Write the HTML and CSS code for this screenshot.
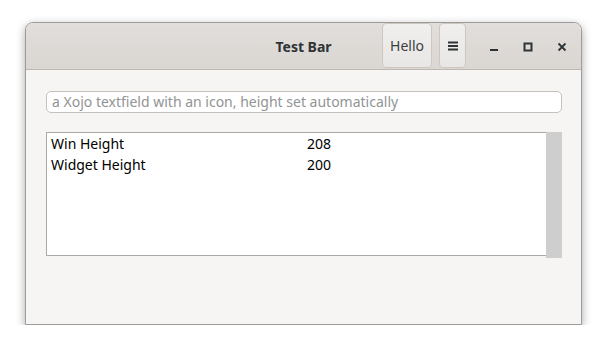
FILE: index.html
```html
<!DOCTYPE html>
<html lang="en">
<head>
    <meta charset="UTF-8">
    <meta name="viewport" content="width=device-width, initial-scale=1.0">
    <title>Test Bar</title>
    <link rel="stylesheet" href="styles.css">
</head>
<body>
    <div class="window">
        <div class="headerbar">
            <div></div>
            <div class="title">Test Bar</div>
            <div class="header-end">
                <button class="hbutton hello">Hello</button>
                <button class="hbutton menu">
                    <svg width="12" height="12" viewBox="0 0 12 12">
                        <rect x="1" y="1.5" width="10" height="2" fill="#2e3436"/>
                        <rect x="1" y="5" width="10" height="2" fill="#2e3436"/>
                        <rect x="1" y="8.5" width="10" height="2" fill="#2e3436"/>
                    </svg>
                </button>
                <div class="controls">
                    <span class="ctl">
                        <svg width="10" height="10" viewBox="0 0 10 10"><rect x="1" y="7" width="8" height="2" fill="#2e3436"/></svg>
                    </span>
                    <span class="ctl">
                        <svg width="10" height="10" viewBox="0 0 10 10"><rect x="1.5" y="1.5" width="7" height="7" fill="none" stroke="#2e3436" stroke-width="2"/></svg>
                    </span>
                    <span class="ctl">
                        <svg width="10" height="10" viewBox="0 0 10 10"><path d="M1.5 1.5 L8.5 8.5 M8.5 1.5 L1.5 8.5" stroke="#2e3436" stroke-width="1.8"/></svg>
                    </span>
                </div>
            </div>
        </div>
        <div class="content">
            <div class="textfield">a Xojo textfield with an icon, height set automatically</div>
            <div class="listbox">
                <div class="rows">
                    <div class="row"><span class="col1">Win Height</span><span>208</span></div>
                    <div class="row"><span class="col1">Widget Height</span><span>200</span></div>
                </div>
                <div class="scrollbar"></div>
            </div>
        </div>
    </div>
</body>
</html>
```

FILE: styles.css
```css
body {
    margin: 0;
    background: #ffffff;
    font-family: 'Noto Sans', 'Open Sans', sans-serif;
    color: #2e3436;
}
.window {
    margin: 22px 0 0 25px;
    width: 557px;
    height: 303px;
    box-sizing: border-box;
    border: 1px solid #9e9c9a;
    border-radius: 8px 8px 0 0;
    background: #f6f5f4;
    box-shadow: 0 3px 10px rgba(0, 0, 0, 0.35);
    overflow: hidden;
}
.headerbar {
    height: 46px;
    display: grid;
    grid-template-columns: 1fr auto 1fr;
    align-items: center;
    background: linear-gradient(#e1dedb, #dad6d2);
    border-bottom: 1px solid #bfb8b1;
}
.title {
    font-weight: bold;
    font-size: 14px;
}
.header-end {
    display: flex;
    justify-content: flex-end;
    align-items: stretch;
    height: 100%;
}
.hbutton {
    height: 45px;
    border: 1px solid #cdc7c2;
    border-radius: 4px;
    background: linear-gradient(#f0efed, #e9e7e5);
    font-family: inherit;
    font-size: 14px;
    color: #3a3e40;
    padding: 0;
    display: flex;
    align-items: center;
    justify-content: center;
}
.hello {
    width: 50px;
}
.menu {
    width: 27px;
    margin-left: 7px;
}
.controls {
    display: flex;
    align-items: center;
    margin-left: 11px;
    padding-right: 2px;
}
.ctl {
    width: 34px;
    display: flex;
    justify-content: center;
    padding-top: 2px;
}
.content {
    padding: 21px 19px 0 20px;
}
.textfield {
    height: 20px;
    border: 1px solid #c4c0bb;
    border-radius: 5px;
    background: #ffffff;
    font-size: 14px;
    line-height: 20px;
    color: #919494;
    padding-left: 5px;
}
.listbox {
    margin-top: 19px;
    display: flex;
    height: 126px;
}
.rows {
    flex: 1;
    height: 124px;
    background: #ffffff;
    border: 1px solid #aaaaaa;
    border-right: none;
    box-sizing: border-box;
}
.row {
    display: flex;
    font-size: 14px;
    line-height: 21px;
    color: #000000;
    padding-left: 4px;
}
.col1 {
    width: 256px;
}
.scrollbar {
    width: 16px;
    background: #cecece;
}
```
